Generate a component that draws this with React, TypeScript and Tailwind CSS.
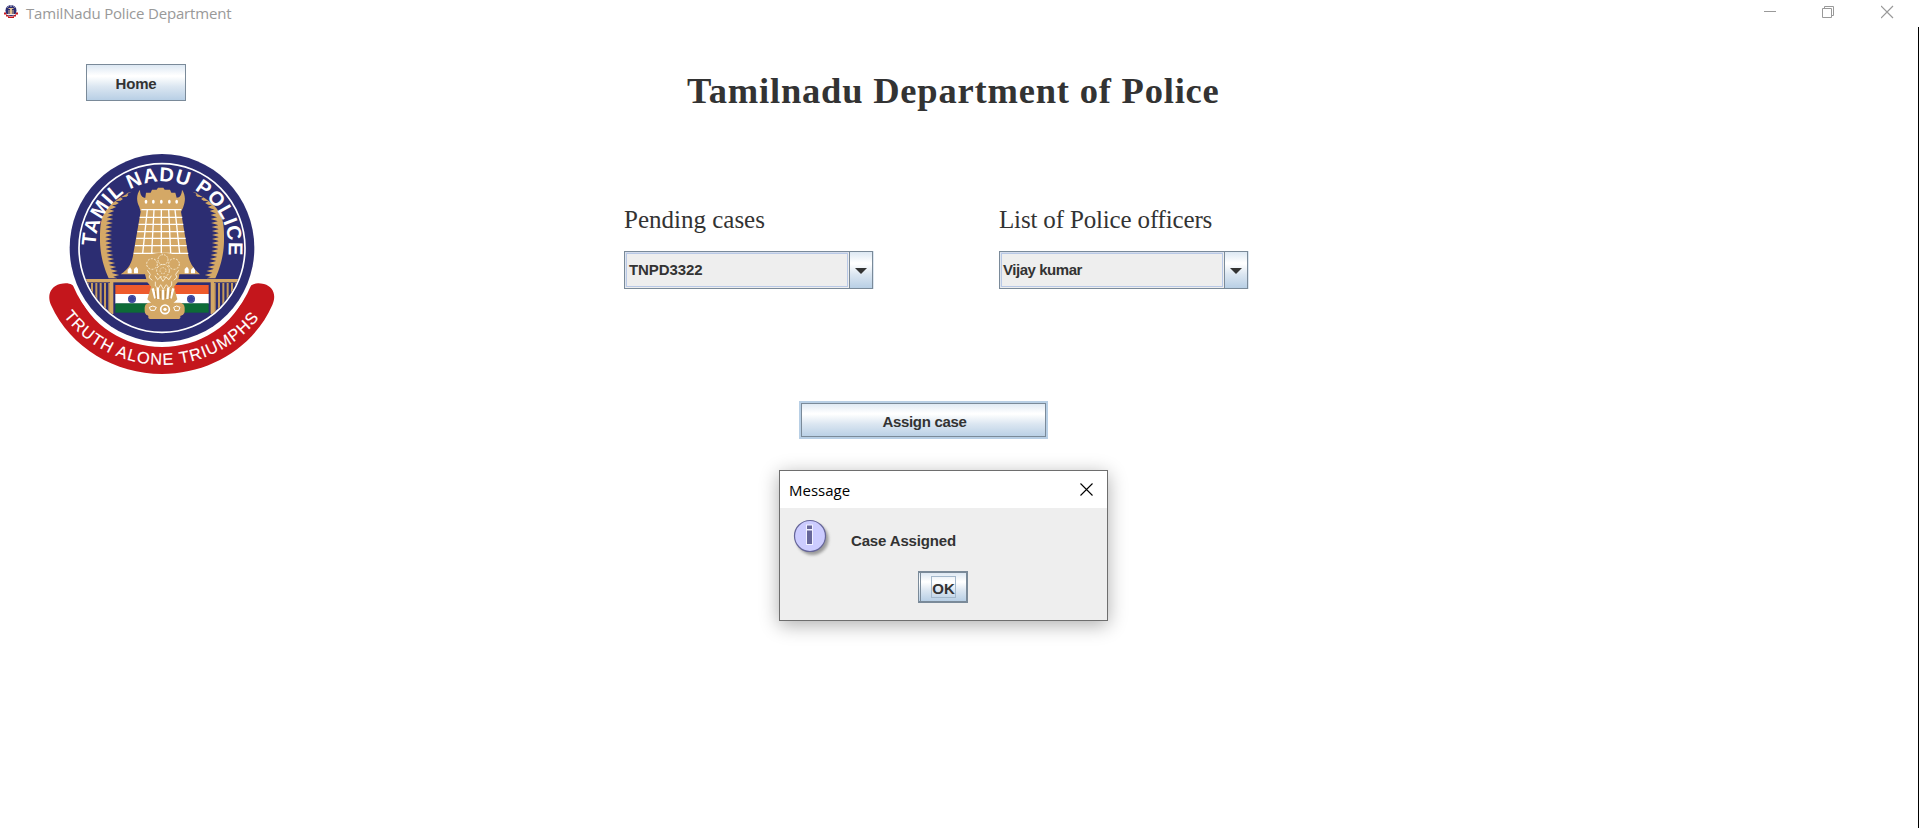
import React from "react";

const BUTTON_FILL =
  "bg-[linear-gradient(to_bottom,#dde8f3_0%,#ffffff_30%,#ffffff_33%,#dbe6f1_62%,#b8cfe5_100%)]";

function frondOuterX(y: number) {
  return y < 285 ? 180 + 95 * Math.pow((285 - y) / 145, 3.4) : 180 + 26 * Math.pow((y - 285) / 115, 2);
}

function frondPath() {
  const outer: string[] = [];
  for (let y = 400; y >= 140; y -= 10) outer.push(`${frondOuterX(y).toFixed(1)} ${y}`);
  const teeth: string[] = [];
  for (let y = 150; y <= 390; y += 12) {
    const w = 36 * Math.min(1, 0.2 + (y - 140) / 110);
    const x = frondOuterX(y);
    teeth.push(`${(x + w * 0.45).toFixed(1)} ${y - 5}`, `${(x + w).toFixed(1)} ${y}`, `${(x + w * 0.5).toFixed(1)} ${y + 5}`);
  }
  return `M${outer.join(" L")} L${teeth.join(" L")} L232 400 Z`;
}

const FROND = frondPath();

function Emblem({ className }: { className: string }) {
  return (
    <svg viewBox="0 0 735 720" className={className} aria-label="Tamil Nadu Police emblem">
      <defs>
        <path id="upperArc" d="M166 309 A200 200 0 0 1 566 309 A200 200 0 0 1 550 387" />
        <path id="lowerArc" d="M67 508 A372 372 0 0 0 666 508" />
        <clipPath id="innerDisc">
          <ellipse cx="366" cy="309" rx="246" ry="250" />
        </clipPath>
      </defs>
      <path
        d="M33 480 C20 450 32 425 60 417 C85 411 99 417 108 432 C150 545 255 606 366 606 C477 606 582 545 624 432 C633 417 647 411 672 417 C700 425 710 450 697 480 C640 610 505 687 366 687 C227 687 92 610 33 480 Z"
        fill="#c4161c"
      />
      <ellipse cx="366" cy="309" rx="289" ry="294" fill="#fff" />
      <ellipse cx="366" cy="309" rx="277" ry="282" fill="#2c2d72" />
      <ellipse cx="366" cy="309" rx="249" ry="253" fill="none" stroke="#fff" strokeWidth="5" />
      <path d={FROND} fill="#d4a866" />
      <path d={FROND} fill="#d4a866" transform="translate(732 0) scale(-1 1)" />
      <g clipPath="url(#innerDisc)">
        <rect x="110" y="402" width="512" height="10" fill="#d4a866" />
        {[140, 153, 166, 179, 192, 205].map((x) => (
          <g key={x} fill="#c59a5c">
            <rect x={x} y="414" width="6" height={(x - 140) * 1.4 + 24} />
            <rect x={726 - x} y="414" width="6" height={(x - 140) * 1.4 + 24} />
          </g>
        ))}
        <rect x="210" y="402" width="10" height="105" fill="#d4a866" />
        <rect x="512" y="402" width="10" height="105" fill="#d4a866" />
      </g>
      <rect x="226" y="420" width="280" height="28" fill="#ee5a2c" />
      <rect x="226" y="447" width="280" height="29" fill="#fff" />
      <rect x="226" y="475" width="280" height="28" fill="#0d6b37" />
      {[276, 453].map((x) => (
        <g key={x}>
          <circle cx={x} cy="462" r="12" fill="#39429a" />
          <circle cx={x} cy="462" r="9" fill="none" stroke="#8d93cc" strokeWidth="1.5" strokeDasharray="2 3" />
        </g>
      ))}
      <path
        d="M298 186 C287 165 291 145 300 134 C300 150 307 158 316 158 L318 143 L332 143 L336 134 L350 134 L354 128 L370 128 L374 134 L390 134 L394 143 L406 143 L410 158 C421 158 425 148 426 134 C436 148 438 166 429 188 L423 200 L444 326 C447 350 459 370 480 388 L242 388 C267 372 277 350 280 326 L302 200 Z"
        fill="#d4a866"
      />
      <g stroke="#fff" strokeWidth="4" fill="none">
        <path d="M304 194H424M299 217H427M296 238H430M292 260H433M289 280H437M285 302H440M281 325H445" />
        <path d="M322 194L308 325M342 194L335 325M364 194V325M386 194L392 325M405 194L419 325" />
      </g>
      <g fill="#fff">
        {[318, 340, 364, 388, 410].map((x) => (
          <ellipse key={x} cx={x} cy="170" rx="4" ry="6" />
        ))}
        <path d="M263 374l7-7 5 7v11h-12zM282 372l7-7 5 7v13h-12zM434 372l7-7 5 7v13h-12zM453 374l7-7 5 7v11h-12z" />
      </g>
      <path
        d="M314 350 C321 327 346 322 366 325 C392 321 416 330 423 352 C432 364 426 377 418 388 L414 410 L402 425 L412 463 L394 480 L340 480 L322 463 L333 425 L321 410 L315 388 C305 374 306 360 314 350Z"
        fill="#d4a866"
      />
      <g fill="none" stroke="#f7ead0" strokeWidth="3">
        <circle cx="336" cy="357" r="16" strokeDasharray="6 4" />
        <circle cx="369" cy="344" r="15" strokeDasharray="5 3" />
        <circle cx="402" cy="357" r="16" strokeDasharray="6 4" />
        <circle cx="369" cy="377" r="19" strokeDasharray="7 4" />
        <circle cx="369" cy="377" r="9" strokeDasharray="4 4" />
        <path d="M322 376l9 12-4 9 10 9M416 376l-9 12 4 9-10 9M345 392l8 12 8-8 8 13 9-13 9 8 7-12M346 410v13l9 8 7-12 8 14 9-14 8 10 8-9v-11" />
      </g>
      <path d="M338 430l8 30M353 428l2 34M369 434v30M385 428l-3 34M400 430l-8 30" stroke="#fff" strokeWidth="7" />
      <path d="M346 438l3 24M361 438v22M377 438v22M392 438l-3 24" stroke="#b98a48" strokeWidth="3" />
      <rect x="314" y="473" width="120" height="40" rx="15" fill="#d4a866" />
      <rect x="325" y="506" width="96" height="16" rx="5" fill="#d4a866" />
      <circle cx="375" cy="493" r="13" fill="none" stroke="#fff" strokeWidth="5" />
      <circle cx="375" cy="493" r="5" fill="#fff" />
      <path d="M328 487q10-8 21 0l-5 9h-12zM401 487q8-8 19 0l-4 10h-11z" fill="none" stroke="#fff" strokeWidth="3" />
      <text fill="#fff" fontFamily="Liberation Sans, sans-serif" fontWeight="700" fontSize="60">
        <textPath href="#upperArc" startOffset="6" textLength="644" lengthAdjust="spacing">
          TAMIL NADU POLICE
        </textPath>
      </text>
      <text fill="#fff" stroke="#fff" strokeWidth=".4" fontFamily="Liberation Sans, sans-serif" fontSize="49">
        <textPath href="#lowerArc" startOffset="6" textLength="676" lengthAdjust="spacing">
          TRUTH ALONE TRIUMPHS
        </textPath>
      </text>
    </svg>
  );
}

function MiniEmblem() {
  return (
    <svg className="ml-[4px] mt-[5px] h-[13px] w-[14px] shrink-0" viewBox="0 0 14 13">
      <path d="M0 7.500h2.500v2.500h2v1.500h5V10h2V7.500H14v2h-2v2h-2V13H4v-1.500H2v-2H0z" fill="#c4161c" />
      <circle cx="7" cy="5.500" r="5.500" fill="#2c2d72" />
      <path d="M4.500 3h5v1h-5zM6 4h2v5H6zM4.500 5H5.500v4H4.500zM8.500 5h1v4h-1z" fill="#e0c090" />
      <path d="M3 9h8v1H3z" fill="#f3eeee" />
      <path d="M3.500 2.500l1-1M6 1h2M9.500 1.500l1 1" stroke="#fff" strokeWidth=".8" />
    </svg>
  );
}

function TitleBar() {
  return (
    <header className="flex h-[27px] items-start bg-white">
      <MiniEmblem />
      <span className="ml-[8px] mt-[3px] whitespace-nowrap font-['Open_Sans',sans-serif] text-[15px] leading-[21px] tracking-[-0.18px] text-[#999]">
        TamilNadu Police Department
      </span>
      <div className="ml-auto mr-[25px] mt-[5px] flex gap-[46px] text-[#999]">
        <svg className="h-[14px] w-[13px]" viewBox="0 0 13 14" fill="none" stroke="currentColor">
          <path d="M1 6.5H13" />
        </svg>
        <svg className="h-[14px] w-[13px]" viewBox="0 0 13 14" fill="none" stroke="currentColor">
          <path d="M.5 3.5h9v9h-9zM2.500 3V1.500h9v9H10" />
        </svg>
        <svg className="h-[14px] w-[13px]" viewBox="0 0 13 14" fill="none" stroke="currentColor" strokeWidth="1.200">
          <path d="M0 1l12 12M12 1l-12 12" />
        </svg>
      </div>
    </header>
  );
}

function ComboField({ label, value, labelClass, valueClass }: { label: string; value: string; labelClass: string; valueClass: string }) {
  return (
    <div className="w-[249px]">
      <div
        className={`whitespace-nowrap font-['Liberation_Serif',serif] text-[25px] leading-[30px] text-[#333] ${labelClass}`}
      >
        {label}
      </div>
      <div className="mt-[16px] flex h-[38px] border border-[#7a8a99] bg-[#eee] shadow-[1px_0_0_#dce6f0]">
        <div className="flex flex-1 border border-t-[#d4dcec] border-l-[#dfe5ee] border-r-[#eee] border-b-[#eee]">
          <div className={`flex flex-1 items-center border border-[#b8c8e6] pt-[1px] text-[15px] font-bold ${valueClass}`}>
            {value}
          </div>
        </div>
        <div className={`flex w-[23px] items-center justify-center border-l border-[#7a8a99] ${BUTTON_FILL}`}>
          <svg className="mt-[2px] h-[6px] w-[12px]" viewBox="0 0 12 6">
            <path d="M0 0H12L6 6Z" fill="#333" />
          </svg>
        </div>
      </div>
    </div>
  );
}

function MessageDialog() {
  return (
    <div className="absolute left-[779px] top-[470px] flex h-[151px] w-[329px] flex-col border border-[#6e6e6e] bg-[#eee] shadow-[0_4px_18px_rgba(0,0,0,0.32)]">
      <div className="flex h-[37px] items-center justify-between bg-white pl-[9px] pr-[14px]">
        <span className="pt-[1px] font-['Open_Sans',sans-serif] text-[15px] tracking-[0px] text-black">Message</span>
        <svg className="h-[13px] w-[13px]" viewBox="0 0 13 13" stroke="#000" strokeWidth="1.1">
          <path d="M.5 .5l12 12M12.500 .5l-12 12" />
        </svg>
      </div>
      <div className="flex h-[62px] pl-[13px]">
        <svg className="mt-[11px] h-[40px] w-[40px]" viewBox="0 0 40 40">
          <defs>
            <filter id="soft" x="-20%" y="-20%" width="140%" height="140%">
              <feGaussianBlur stdDeviation="1.4" />
            </filter>
          </defs>
          <circle cx="19.500" cy="20" r="16" fill="#777" opacity=".7" filter="url(#soft)" />
          <circle cx="17" cy="17" r="15.500" fill="#ccccff" stroke="#666699" strokeWidth="1.200" />
          <path d="M13 5.500h7v20.500h-7z" fill="#f1f1ff" />
          <path d="M14 6.500h5v3.500h-5zM14 11.500h5V25h-5z" fill="#666699" />
        </svg>
        <span className="ml-[18px] mt-[24px] whitespace-nowrap text-[15px] font-bold leading-[18px] tracking-[-0.15px]">
          Case Assigned
        </span>
      </div>
      <button className={`ml-[138px] mt-[1px] flex h-[32px] w-[50px] border-2 border-l border-[#7a8a99] ${BUTTON_FILL}`}>
        <span className="ml-[1px] flex h-full flex-1 justify-center border-l border-[#7a8a99] pt-[3px]">
          <span className="flex h-[22px] w-[25px] items-center justify-center border border-[#a3b8cc] pt-[2px] text-[15px] font-bold leading-none tracking-[-0.1px]">
            OK
          </span>
        </span>
      </button>
    </div>
  );
}

export default function App() {
  return (
    <div className="relative h-[828px] w-[1919px] overflow-hidden bg-white font-['Liberation_Sans',sans-serif] text-[#333]">
      <TitleBar />
      <div className="flex h-[801px] border-r border-black">
        <aside className="w-[624px] pl-[40px] pt-[37px]">
          <button
            className={`ml-[46px] flex h-[37px] w-[100px] items-center justify-center border border-[#7a8a99] pt-[4px] text-[15px] font-bold tracking-[-0.2px] ${BUTTON_FILL}`}
          >
            Home
          </button>
          <Emblem className="mt-[44px] h-[240px] w-[245px]" />
        </aside>
        <main className="w-[624px]">
          <h1 className="ml-[63px] mt-[42px] whitespace-nowrap font-['Liberation_Serif',serif] text-[36.5px] font-bold leading-[44px] tracking-[0.8px]">
            Tamilnadu Department of Police
          </h1>
          <div className="mt-[92px] flex gap-[126px]">
            <ComboField label="Pending cases" value="TNPD3322" labelClass="" valueClass="pl-[2px] tracking-[-0.08px]" />
            <ComboField
              label="List of Police officers"
              value="Vijay kumar"
              labelClass="tracking-[-0.16px]"
              valueClass="pl-[1px] tracking-[-0.45px]"
            />
          </div>
          <button
            className={`ml-[175px] mt-[112px] flex h-[38px] w-[249px] items-center justify-center border-2 border-[#b8cfe5] ${BUTTON_FILL}`}
          >
            <span className="flex h-full w-full items-center justify-center border border-[#7a8a99] pt-[4px] pl-[2px] text-[15px] font-bold tracking-[-0.3px]">
              Assign case
            </span>
          </button>
        </main>
      </div>
      <MessageDialog />
    </div>
  );
}
